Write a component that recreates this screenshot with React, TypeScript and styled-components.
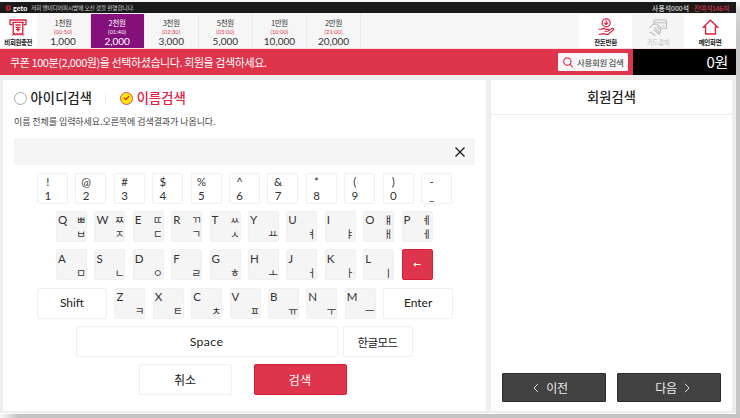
import React from "react";
import styled, { createGlobalStyle, css } from "styled-components";

const RED = "#de344c";

const GlobalStyle = createGlobalStyle`
  *, *::before, *::after { box-sizing: border-box; }
  html, body { margin: 0; padding: 0; }
  body {
    background: #fff;
    font-family: "Noto Sans CJK KR", sans-serif;
    color: #222;
    overflow: hidden;
  }
  button { font: inherit; color: inherit; margin: 0; padding: 0; border: 0; background: none; }
`;

const Backdrop = styled.div`
  width: 740px;
  height: 418px;
  display: grid;
  grid-template-columns: 736px 4px;
  grid-template-rows: 414px 4px;
  background: #c4c4c4;
`;

const RightShade = styled.div`
  background: linear-gradient(180deg, #fbfbfb 0, #d6d6d6 12px, #c6c6c6 40px, #c6c6c6 100%);
`;

const BottomShade = styled.div`
  grid-column: 1 / 3;
  background: linear-gradient(90deg, #fafafa 0, #c4c4c4 18px, #c4c4c4 100%);
`;

const Screen = styled.main`
  display: flex;
  flex-direction: column;
  width: 736px;
  height: 414px;
  border-top: 2px solid #f4f8f9;
  border-bottom: 1px solid #fff;
  background: #eee;
`;

const Text = styled.span<{ $size: number; $gap?: number; $weight?: number; $color?: string; $latin?: boolean }>`
  display: block;
  white-space: nowrap;
  font-size: ${(p) => p.$size}px;
  line-height: ${(p) => Math.round(p.$size * 1.2)}px;
  letter-spacing: ${(p) => p.$gap ?? 0}px;
  font-weight: ${(p) => p.$weight ?? 400};
  color: ${(p) => p.$color ?? "inherit"};
  ${(p) => p.$latin && css`font-family: Lato, "Noto Sans CJK KR", sans-serif;`}
`;

const StatusBar = styled.header`
  display: flex;
  align-items: center;
  height: 11px;
  padding: 0 7px 0 6px;
  background: #1a1a1a;
  color: #fff;
`;

const Logo = styled.div`
  display: flex;
  align-items: center;
  gap: 2px;
  width: 25px;
`;

const SeatCounts = styled.div`
  display: flex;
  gap: 5px;
`;

const Spacer = styled.div`
  flex: 1;
`;

const Pricing = styled.nav`
  display: flex;
  height: 36px;
  padding-top: 1px;
  border-bottom: 1px solid #fbdde1;
  background: #f6f6f6;
`;

const IconCell = styled.button<{ $width: number; $muted?: boolean }>`
  display: flex;
  flex-direction: column;
  align-items: center;
  justify-content: space-between;
  width: ${(p) => p.$width}px;
  height: 34px;
  padding: 4px 0 2.5px;
  background: ${(p) => (p.$muted ? "#f5f5f5" : "#fff")};
  color: ${(p) => (p.$muted ? "#c6c6c6" : "#222")};
`;

const PriceCell = styled.button<{ $active?: boolean }>`
  display: flex;
  flex-direction: column;
  align-items: center;
  gap: 0.5px;
  width: 54.1px;
  padding: 4px 0 0;
  border-right: 1px solid #e9e9e9;
  background: ${(p) => (p.$active ? "#850f7b" : "transparent")};
  color: ${(p) => (p.$active ? "#fff" : "#333")};
`;

const Notice = styled.section`
  display: flex;
  height: 27px;
  background: ${RED};
  border-bottom: 1px solid #f3eaeb;
  color: #fff;
`;

const NoticeBody = styled.div`
  display: flex;
  flex: 1;
  align-items: center;
  justify-content: space-between;
  padding: 0 5px 0 10px;
`;

const MemberSearch = styled.button`
  display: flex;
  align-items: center;
  gap: 4px;
  width: 70px;
  height: 18px;
  padding-left: 5px;
  border-radius: 1px;
  background: #f8f6f6;
  color: #333;
`;

const Balance = styled.div`
  display: flex;
  align-items: center;
  justify-content: flex-end;
  width: 103px;
  padding-right: 8px;
  background: #000;
`;

const Workspace = styled.div`
  display: flex;
  flex: 1;
  gap: 5px;
  padding: 4px 4px 2px 3px;
`;

const EntryPanel = styled.section`
  width: 483px;
  padding: 10px 11px 0;
  background: #fff;
`;

const Tabs = styled.div`
  display: flex;
  align-items: center;
  height: 16px;
`;

const Radio = styled.span<{ $checked?: boolean }>`
  display: flex;
  align-items: center;
  justify-content: center;
  width: 13px;
  height: 13px;
  margin-right: 3.5px;
  border: 1px solid ${(p) => (p.$checked ? "#d9467a" : "#aaa")};
  border-radius: 50%;
  background: ${(p) => (p.$checked ? "#ffeb00" : "#fff")};
`;

const Tab = styled.button`
  display: flex;
  align-items: center;
`;

const TabDivider = styled.span`
  width: 1px;
  height: 11px;
  margin: 0 14px 0 13px;
  background: #eee;
`;

const Hint = styled.div`
  height: 32px;
  padding-top: 9.500px;
`;

const Field = styled.div`
  display: flex;
  align-items: center;
  justify-content: flex-end;
  height: 27px;
  padding-right: 9px;
  background: #f5f5f5;
`;

const Keyboard = styled.div`
  display: flex;
  flex-direction: column;
  gap: 7.4px;
  padding-top: 7.5px;
`;

const KeyRow = styled.div<{ $indent: number; $gap?: number }>`
  display: flex;
  gap: ${(p) => p.$gap ?? 7.4}px;
  height: 31px;
  padding-left: ${(p) => p.$indent}px;
`;

const keyFrame = css`
  height: 31px;
  border: 1px solid #f0f0f0;
  border-radius: 2px;
`;

const NumberKey = styled.button`
  ${keyFrame}
  display: flex;
  flex-direction: column;
  align-items: center;
  width: 31px;
  padding: 1.5px 9.500px 0 0;
  color: #333;
`;

const LetterKey = styled.button`
  ${keyFrame}
  display: grid;
  grid-template: 14px 14px / 1fr auto;
  width: 31px;
  padding: 1.5px 0 0 1px;
  background: #f5f5f5;
  color: #333;
`;

const Cell = styled.span<{ $col: number; $row: number }>`
  grid-area: ${(p) => p.$row} / ${(p) => p.$col};
  justify-self: ${(p) => (p.$col === 1 ? "start" : "end")};
`;

const WideKey = styled.button<{ $width: number; $primary?: boolean }>`
  ${keyFrame}
  display: flex;
  align-items: center;
  justify-content: center;
  width: ${(p) => p.$width}px;
  ${(p) => p.$primary && css`
    background: ${RED};
    border-color: #d41d39;
    color: #fff;
  `}
`;

const ResultPanel = styled.section`
  display: flex;
  flex-direction: column;
  width: 241px;
  background: #fff;
`;

const ResultTitle = styled.h2`
  display: flex;
  align-items: center;
  justify-content: center;
  height: 35px;
  margin: 0;
  border-bottom: 1px solid #eee;
`;

const Pager = styled.div`
  display: flex;
  gap: 11px;
  margin-top: auto;
  padding: 0 11px 9px;
`;

const PagerButton = styled.button<{ $next?: boolean }>`
  display: flex;
  align-items: center;
  justify-content: center;
  gap: 7px;
  width: 104px;
  height: 29px;
  padding: ${(p) => (p.$next ? "0 0 0 7px" : "0 7px 0 0")};
  border: 1px solid #2b2b2b;
  border-radius: 1px;
  background: #424242;
  color: #eee;
`;

const LogoMark = () => (
  <svg width="5" height="6" viewBox="0 0 5 6" fill="none" stroke="#e6233f" strokeWidth="1.4">
    <rect x=".8" y=".9" width="3.4" height="4.2" rx="1.500" />
  </svg>
);

const ChargeIcon = () => (
  <svg width="18" height="18" viewBox="0 0 18 18" fill="none" stroke="#dc1f3c" strokeWidth="1.3">
    <path d="M3.500 6.700H1V2h16v4.700h-2.500M3.500 4.300h11" />
    <path d="M4.200 4.300V16.700l1.200-1 1.200 1 1.200-1 1.200 1 1.200-1 1.200 1 1.200-1 1.200 1V4.300" />
    <path d="M6.500 7h5M6.500 9.300h5M9 9.300v4.200M7 11.500h4" />
  </svg>
);

const CoinHandIcon = () => (
  <svg width="18" height="18" viewBox="0 0 18 18" fill="none" stroke="#dc1f3c" strokeWidth="1.15" strokeLinecap="round" strokeLinejoin="round">
    <circle cx="9.200" cy="4.800" r="4" />
    <path d="M9.200 2.900v3.600M7.800 5.200l1.400 1.400 1.400-1.400" />
    <path d="M2 11.200h2.500c1.500-1.200 3.200-.8 4.300.2h2c1.300 0 1.300 1.800 0 1.800H8M11.800 12.400l3.200-1.900c1.300-.6 2.200.7 1.200 1.600l-4.600 3.900c-.7.500-1.400.6-2.300.4L6 15.600l-3.800.9" />
  </svg>
);

const CardHandIcon = () => (
  <svg width="19" height="18" viewBox="0 0 19 18" fill="none" stroke="#bdbdbd" strokeWidth="1.100" strokeLinecap="round" strokeLinejoin="round">
    <path d="M5 5.300V3c0-.6.4-1 1-1h10.500c.6 0 1 .4 1 1v6.500c0 .6-.4 1-1 1h-3M5 4.800h12.500M13.500 8h2" />
    <path d="M1 9.300 4.300 6.300h4l3.400 2.800c1 1-.2 2.200-1.300 1.400L8 8.700M5.700 9.500l3.900 4.200c.9 1-.3 2-1.200 1.200L5 11.700M1 14.200l2 .8 2.800 2.200M11.500 10.500V14L10 16.500" />
  </svg>
);

const HomeIcon = () => (
  <svg width="17" height="18" viewBox="0 0 17 18" fill="none" stroke="#dc1f3c" strokeWidth="1.350" strokeLinejoin="miter">
    <path d="M3.600 9H1.500l7-6.800 7 6.800h-2.100v7H3.600Z" />
  </svg>
);

const SearchIcon = () => (
  <svg width="10" height="11" viewBox="0 0 10 11" fill="none" stroke="#de344c" strokeWidth="1.150" strokeLinecap="round">
    <circle cx="4.300" cy="4.600" r="3.700" />
    <path d="m7 7.400 2.300 2.500" />
  </svg>
);

const CheckIcon = () => (
  <svg width="7" height="6" viewBox="0 0 7 6" fill="none" stroke="#d8203e" strokeWidth="1.200">
    <path d="m.8 2.700 2 2L6.200 1" />
  </svg>
);

const CloseIcon = () => (
  <svg width="12" height="12" viewBox="0 0 12 12" fill="none" stroke="#222" strokeWidth="1.400">
    <path d="m1.500 1.500 9 9M10.500 1.500l-9 9" />
  </svg>
);

const Chevron = ({ next }: { next?: boolean }) => (
  <svg width="6" height="10" viewBox="0 0 6 10" fill="none" stroke="#ddd" strokeWidth="1">
    <path d={next ? "m1 .8 4 4.200-4 4.200" : "M5 .8 1 5l4 4.200"} />
  </svg>
);

const BackArrow = () => (
  <svg width="8" height="6" viewBox="0 0 8 6" fill="none" stroke="#fff" strokeWidth="1.100">
    <path d="M1 2.500h6.500M2.700 1 1.200 2.500 2.700 4" />
  </svg>
);

const prices = [
  ["1천원", "(00:50)", "1,000"],
  ["2천원", "(01:40)", "2,000"],
  ["3천원", "(02:30)", "3,000"],
  ["5천원", "(05:00)", "5,000"],
  ["1만원", "(10:00)", "10,000"],
  ["2만원", "(21:00)", "20,000"],
];

const numberKeys = ["!1", "@2", "#3", "$4", "%5", "^6", "&7", "*8", "(9", ")0", "-_"];

const topLetters = ["Qㅃㅂ", "Wㅉㅈ", "Eㄸㄷ", "Rㄲㄱ", "Tㅆㅅ", "Y ㅛ", "U ㅕ", "I ㅑ", "Oㅒㅐ", "Pㅖㅔ"];
const homeLetters = ["A ㅁ", "S ㄴ", "D ㅇ", "F ㄹ", "G ㅎ", "H ㅗ", "J ㅓ", "K ㅏ", "L ㅣ"];
const bottomLetters = ["Z ㅋ", "X ㅌ", "C ㅊ", "V ㅍ", "B ㅠ", "N ㅜ", "M ㅡ"];

const Letter = ({ value }: { value: string }) => (
  <LetterKey>
    <Cell $col={1} $row={1}><Text $size={11.5} $latin>{value[0]}</Text></Cell>
    <Cell $col={2} $row={1}><Text $size={10.5}>{value[1].trim()}</Text></Cell>
    <Cell $col={2} $row={2}><Text $size={10.5}>{value[2]}</Text></Cell>
  </LetterKey>
);

export default function App() {
  return (
    <>
      <GlobalStyle />
      <Backdrop>
        <Screen>
          <StatusBar>
            <Logo>
              <LogoMark />
              <Text $size={7} $weight={900} $gap={0.1} $latin>geto</Text>
            </Logo>
            <Text $size={5.7} $gap={-0.12} $color="#ddd">저희 앤미디어피시방에 오신 것을 환영합니다.</Text>
            <Spacer />
            <SeatCounts>
              <Text $size={6.8} $gap={0.1}>사용석000석</Text>
              <Text $size={6.8} $gap={-0.2} $color="#e8384f">잔여석146석</Text>
            </SeatCounts>
          </StatusBar>

          <Pricing>
            <IconCell $width={36.5}>
              <ChargeIcon />
              <Text $size={6.5} $gap={-0.4} $weight={700}>비회원충전</Text>
            </IconCell>
            {prices.map(([name, time, amount], i) => (
              <PriceCell key={name} $active={i === 1}>
                <Text $size={7.5} $gap={-0.3}>{name}</Text>
                <Text $size={5.6} $gap={0.1} $latin $color={i === 1 ? "#fff" : RED}>{time}</Text>
                <Text $size={10} $latin>{amount}</Text>
              </PriceCell>
            ))}
            <Spacer />
            <IconCell $width={53}>
              <CoinHandIcon />
              <Text $size={6.5} $gap={-0.3} $weight={700}>잔돈반환</Text>
            </IconCell>
            <IconCell $width={52} $muted>
              <CardHandIcon />
              <Text $size={6.5} $gap={-0.3}>카드결제</Text>
            </IconCell>
            <IconCell $width={52}>
              <HomeIcon />
              <Text $size={6.5} $gap={-0.3} $weight={700}>메인화면</Text>
            </IconCell>
          </Pricing>

          <Notice>
            <NoticeBody>
              <Text $size={11} $gap={-0.42}>쿠폰 100분(2,000원)을 선택하셨습니다. 회원을 검색하세요.</Text>
              <MemberSearch>
                <SearchIcon />
                <Text $size={8.5} $gap={-0.35}>사용회원 검색</Text>
              </MemberSearch>
            </NoticeBody>
            <Balance>
              <Text $size={15} $gap={-0.3}>0원</Text>
            </Balance>
          </Notice>

          <Workspace>
            <EntryPanel>
              <Tabs>
                <Tab>
                  <Radio />
                  <Text $size={13.2} $gap={0.2} $weight={500}>아이디검색</Text>
                </Tab>
                <TabDivider />
                <Tab>
                  <Radio $checked><CheckIcon /></Radio>
                  <Text $size={13.2} $gap={0.2} $weight={500} $color="#e0213f">이름검색</Text>
                </Tab>
              </Tabs>
              <Hint>
                <Text $size={9} $gap={-0.07} $color="#444">이름 전체를 입력하세요.오른쪽에 검색결과가 나옵니다.</Text>
              </Hint>
              <Field><CloseIcon /></Field>
              <Keyboard>
                <KeyRow $indent={23}>
                  {numberKeys.map((k) => (
                    <NumberKey key={k}>
                      <Text $size={11.5} $latin>{k[0]}</Text>
                      <Text $size={11.5} $latin>{k[1]}</Text>
                    </NumberKey>
                  ))}
                </KeyRow>
                <KeyRow $indent={42}>
                  {topLetters.map((k) => <Letter key={k} value={k} />)}
                </KeyRow>
                <KeyRow $indent={42}>
                  {homeLetters.map((k) => <Letter key={k} value={k} />)}
                  <WideKey $width={31} $primary><BackArrow /></WideKey>
                </KeyRow>
                <KeyRow $indent={23}>
                  <WideKey $width={70}><Text $size={12} $latin>Shift</Text></WideKey>
                  {bottomLetters.map((k) => <Letter key={k} value={k} />)}
                  <WideKey $width={70}><Text $size={12} $latin>Enter</Text></WideKey>
                </KeyRow>
                <KeyRow $indent={61.5} $gap={5}>
                  <WideKey $width={262}><Text $size={12.3} $gap={0.35} $latin>Space</Text></WideKey>
                  <WideKey $width={70}><Text $size={11.5} $gap={-0.6}>한글모드</Text></WideKey>
                </KeyRow>
                <KeyRow $indent={124.5} $gap={22}>
                  <WideKey $width={93}><Text $size={12} $gap={0}>취소</Text></WideKey>
                  <WideKey $width={93} $primary><Text $size={12} $gap={0.2}>검색</Text></WideKey>
                </KeyRow>
              </Keyboard>
            </EntryPanel>

            <ResultPanel>
              <ResultTitle>
                <Text $size={13.2} $gap={0.1} $weight={500}>회원검색</Text>
              </ResultTitle>
              <Pager>
                <PagerButton><Chevron /><Text $size={12} $gap={-0.4}>이전</Text></PagerButton>
                <PagerButton $next><Text $size={12} $gap={-0.4}>다음</Text><Chevron next /></PagerButton>
              </Pager>
            </ResultPanel>
          </Workspace>
        </Screen>
        <RightShade />
        <BottomShade />
      </Backdrop>
    </>
  );
}
